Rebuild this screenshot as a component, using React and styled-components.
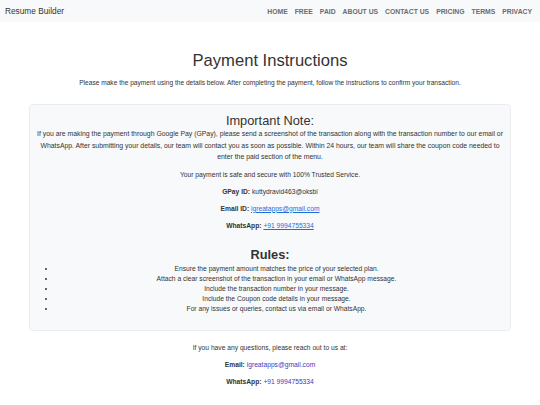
import React from "react";
import styled, { createGlobalStyle } from "styled-components";

const GlobalStyle = createGlobalStyle`
  * { box-sizing: border-box; }
  body {
    margin: 0;
    background: #ffffff;
    font-family: "Liberation Sans", Arial, sans-serif;
    color: #333333;
  }
`;

const navLinks = ["HOME", "FREE", "PAID", "ABOUT US", "CONTACT US", "PRICING", "TERMS", "PRIVACY"];

const rules = [
  "Ensure the payment amount matches the price of your selected plan.",
  "Attach a clear screenshot of the transaction in your email or WhatsApp message.",
  "Include the transaction number in your message.",
  "Include the Coupon code details in your message.",
  "For any issues or queries, contact us via email or WhatsApp.",
];

function App() {
  return (
    <>
      <GlobalStyle />
      <Navbar>
        <Brand>Resume Builder</Brand>
        <Menu>
          {navLinks.map((l) => (
            <MenuLink key={l}>{l}</MenuLink>
          ))}
        </Menu>
      </Navbar>
      <Main>
        <Title>Payment Instructions</Title>
        <Lead>
          Please make the payment using the details below. After completing the payment, follow the
          instructions to confirm your transaction.
        </Lead>
        <Card>
          <SubTitle>Important Note:</SubTitle>
          <NoteText>
            If you are making the payment through Google Pay (GPay), please send a screenshot of the
            transaction along with the transaction number to our email or WhatsApp. After submitting
            your details, our team will contact you as soon as possible. Within 24 hours, our team
            will share the coupon code needed to enter the paid section of the menu.
          </NoteText>
          <Line>Your payment is safe and secure with 100% Trusted Service.</Line>
          <Line>
            <b>GPay ID:</b> kuttydravid463@oksbi
          </Line>
          <Line>
            <b>Email ID:</b> <Link href="#">igreatapps@gmail.com</Link>
          </Line>
          <Line>
            <b>WhatsApp:</b> <Link href="#">+91 9994755334</Link>
          </Line>
          <RulesTitle>Rules:</RulesTitle>
          <RuleList>
            {rules.map((r) => (
              <Rule key={r}>{r}</Rule>
            ))}
          </RuleList>
        </Card>
        <Contact>
          <Line>If you have any questions, please reach out to us at:</Line>
          <Line>
            <b>Email:</b> <FooterLink href="#">igreatapps@gmail.com</FooterLink>
          </Line>
          <Line>
            <b>WhatsApp:</b> <FooterLink href="#">+91 9994755334</FooterLink>
          </Line>
        </Contact>
      </Main>
    </>
  );
}

export default App;

const Navbar = styled.nav`
  display: flex;
  align-items: center;
  justify-content: space-between;
  height: 22px;
  padding: 0 5px;
  background: #f8f9fa;
`;

const Brand = styled.div`
  font-size: 8.3px;
  color: #333;
`;

const Menu = styled.div`
  display: flex;
  gap: 7px;
  padding-right: 3px;
`;

const MenuLink = styled.span`
  font-size: 6.8px;
  font-weight: bold;
  color: #6c6c6c;
`;

const Main = styled.main`
  padding: 0 29px;
  text-align: center;
`;

const Title = styled.h1`
  margin: 29px 0 0;
  font-size: 16.6px;
  font-weight: normal;
  line-height: 20px;
  color: #333;
`;

const Lead = styled.p`
  margin: 7px 0 0;
  font-size: 6.6px;
  line-height: 10px;
`;

const Card = styled.section`
  margin-top: 16px;
  padding: 8px 2px 16px;
  background: #f8f9fa;
  border: 1px solid #eaecef;
  border-radius: 4px;
`;

const SubTitle = styled.h2`
  margin: 0;
  font-size: 12.8px;
  font-weight: normal;
  line-height: 16px;
  color: #333;
`;

const NoteText = styled.p`
  margin: -1px 0 0;
  font-size: 6.86px;
  line-height: 11.5px;
`;

const Line = styled.p`
  margin: 7px 0 0;
  font-size: 6.7px;
  line-height: 10px;
  b {
    color: #333;
  }
`;

const Link = styled.a`
  color: #1a6fe0;
  text-decoration: underline;
`;

const FooterLink = styled.a`
  color: #3a3ac0;
  text-decoration: none;
`;

const RulesTitle = styled.h3`
  margin: 16px 0 0;
  font-size: 12.8px;
  font-weight: bold;
  line-height: 16px;
  color: #333;
`;

const RuleList = styled.ul`
  margin: 1px 0 0;
  padding: 0 11px 0 24px;
`;

const Rule = styled.li`
  font-size: 6.7px;
  line-height: 10px;
`;

const Contact = styled.div`
  margin-top: 12px;
`;
